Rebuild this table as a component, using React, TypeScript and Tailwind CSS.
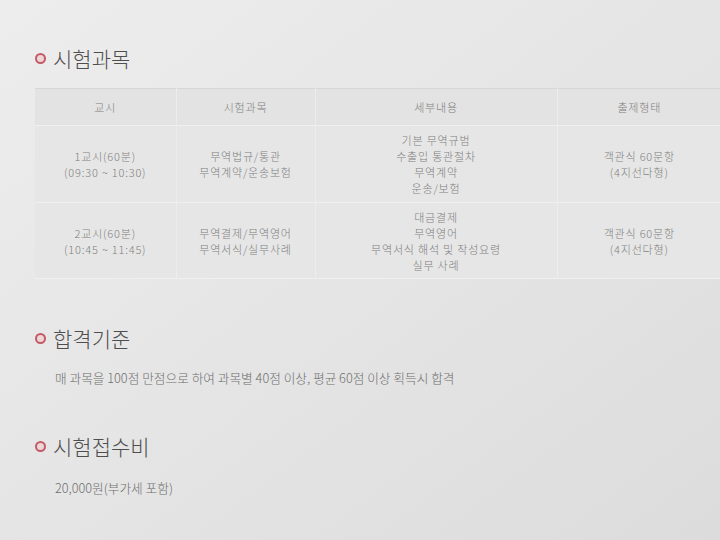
const rows = [
  {
    period: ['1교시(60분)', '(09:30 ~ 10:30)'],
    subjects: ['무역법규/통관', '무역계약/운송보험'],
    details: ['기본 무역규범', '수출입 통관절차', '무역계약', '운송/보험'],
    type: ['객관식 60문항', '(4지선다형)'],
    h: 'h-[77px]',
  },
  {
    period: ['2교시(60분)', '(10:45 ~ 11:45)'],
    subjects: ['무역결제/무역영어', '무역서식/실무사례'],
    details: ['대금결제', '무역영어', '무역서식 해석 및 작성요령', '실무 사례'],
    type: ['객관식 60문항', '(4지선다형)'],
    h: 'h-[76px]',
  },
]

function SectionTitle({ children }: { children: string }) {
  return (
    <div className="flex items-center h-[28px] pl-[35px]">
      <span className="w-[11px] h-[11px] rounded-full border-[2.5px] border-[#c45a66] bg-[#ecd6d8]" />
      <span className="ml-[7px] text-[21px] leading-[28px] text-[#4e4e4e] font-light">{children}</span>
    </div>
  )
}

function Lines({ lines }: { lines: string[] }) {
  return (
    <>
      {lines.map((l) => (
        <div key={l} className="h-[16px]">
          {l}
        </div>
      ))}
    </>
  )
}

export default function App() {
  return (
    <div
      className="w-[720px] h-[540px] overflow-hidden bg-gradient-to-br from-[#ededed] via-[#e5e5e5] to-[#dcdcdc] pt-[44px]"
      style={{ fontFamily: '"Noto Sans CJK KR", "Noto Sans", sans-serif' }}
    >
      <SectionTitle>시험과목</SectionTitle>

      {/* exam table */}
      <div className="mt-[16px] pl-[35px]">
        <table className="w-[722px] table-fixed border-collapse text-[11px] leading-[16px] tracking-[0.8px] font-light text-[#808080] text-center">
          <colgroup>
            <col className="w-[141px]" />
            <col className="w-[139px]" />
            <col className="w-[242px]" />
            <col className="w-[200px]" />
          </colgroup>
          <thead>
            <tr className="h-[37px] bg-[#e3e3e3] border-t border-[#d6d6d6]">
              {['교시', '시험과목', '세부내용', '출제형태'].map((t, i) => (
                <th key={t} className="font-light border-l border-[#ececec] first:border-l-0">
                  <span className={i === 3 ? 'relative -left-[18px]' : ''}>{t}</span>
                </th>
              ))}
            </tr>
          </thead>
          <tbody>
            {rows.map((r, idx) => (
              <tr key={idx} className={`${r.h} bg-[#e6e6e6] border-t border-[#f0f0f0] last:border-b`}>
                <td className="align-middle">
                  <Lines lines={r.period} />
                </td>
                <td className="align-middle border-l border-[#ededed]">
                  <Lines lines={r.subjects} />
                </td>
                <td className="align-middle border-l border-[#ededed]">
                  <Lines lines={r.details} />
                </td>
                <td className="align-middle border-l border-[#ededed]">
                  <span className="relative -left-[18px] inline-block">
                    <Lines lines={r.type} />
                  </span>
                </td>
              </tr>
            ))}
          </tbody>
        </table>
      </div>

      <div className="mt-[45px]">
        <SectionTitle>합격기준</SectionTitle>
      </div>
      <p className="mt-[17px] pl-[55px] text-[12.7px] leading-[18px] font-light text-[#6e6e6e]">
        매 과목을 100점 만점으로 하여 과목별 40점 이상, 평균 60점 이상 획득시 합격
      </p>

      <div className="mt-[45px]">
        <SectionTitle>시험접수비</SectionTitle>
      </div>
      <p className="mt-[19px] pl-[55px] text-[12.7px] leading-[18px] font-light text-[#6e6e6e]">
        20,000원(부가세 포함)
      </p>
    </div>
  )
}
